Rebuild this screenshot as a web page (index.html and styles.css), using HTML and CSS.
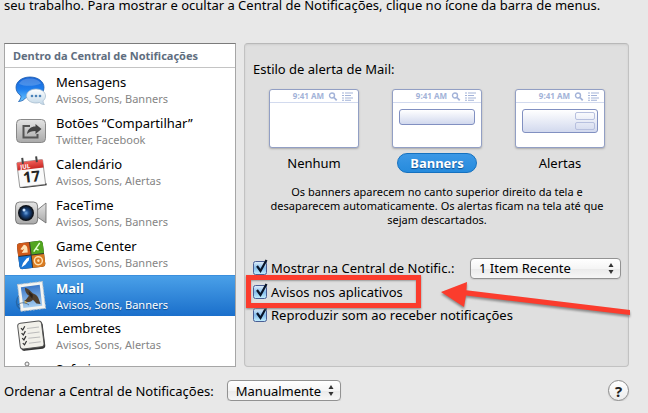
FILE: index.html
```html
<!DOCTYPE html>
<html lang="pt-BR">
<head>
<meta charset="utf-8">
<title>Notificações</title>
<link rel="stylesheet" href="styles.css">
</head>
<body>
<svg class="defs" width="0" height="0" aria-hidden="true">
  <defs>
    <linearGradient id="blue" x2="0" y2="1"><stop stop-color="#1763d6"/><stop offset=".5" stop-color="#1f7fee"/><stop offset="1" stop-color="#6cc8ff"/></linearGradient>
    <linearGradient id="pale" x2="0" y2="1"><stop stop-color="#fff"/><stop offset="1" stop-color="#c3d8e8"/></linearGradient>
    <linearGradient id="grey" x2="0" y2="1"><stop stop-color="#e4e4e4"/><stop offset="1" stop-color="#a9a9a9"/></linearGradient>
    <linearGradient id="red" x2="0" y2="1"><stop stop-color="#f0605a"/><stop offset="1" stop-color="#c92723"/></linearGradient>
    <radialGradient id="lens"><stop stop-color="#6fa6e0"/><stop offset=".4" stop-color="#1d4c8c"/><stop offset="1" stop-color="#0a1526"/></radialGradient>
    <linearGradient id="sky" x2="0" y2="1"><stop stop-color="#3c78c8"/><stop offset="1" stop-color="#a5cdf0"/></linearGradient>
    <symbol id="menubar" viewBox="0 0 26 9">
      <g fill="none" stroke="#a3b3d8"><circle cx="4" cy="3.500" r="2.500" stroke-width="1.400"/><path d="M6 5.500l2.700 2.800" stroke-width="1.800"/><path d="M14 1h2M17 1h8M14 3.500h2M17 3.500h6M14 6h2M17 6h8M14 8.200h2M17 8.200h6" stroke-width="1.100"/></g>
    </symbol>
  </defs>
</svg>
<p class="intro">seu trabalho. Para mostrar e ocultar a Central de Notificações, clique no ícone da barra de menus.</p>
<main class="panes">
  <section class="apps">
    <h2 class="apps-title">Dentro da Central de Notificações</h2>
    <ul class="app-list">
      <li class="app">
        <svg class="app-icon" viewBox="0 0 32 32" aria-hidden="true"><path d="M15 3C7 3 1 7.500 1 13.500c0 3.500 2 6.500 5 8.300 0 2.500-1 4.200-2.500 5.700 3.500-.2 5.800-1.700 7.500-4 9.500 1.500 18-3 18-10C29 7.500 23 3 15 3z" fill="url(#blue)" stroke="#1a5cae" stroke-width=".8"/><path d="M4 10c2-4 6-5.500 11-5.500s9 1.500 11 5c-6 2.500-15 3.500-22 .5z" fill="#fff" opacity=".2"/><path d="M21 15c-5.500 0-9.500 3-9.500 7s4 7 9.500 7c1.200 0 2.300-.1 3.400-.5 1.300 1.300 2.700 2 5 2-.9-1-1.400-2.200-1.300-3.700 1.500-1.200 2.400-2.900 2.400-4.800 0-4-4-7-9.500-7z" fill="url(#pale)" stroke="#9db5c8" stroke-width=".7"/><g fill="#4b83b9"><circle cx="17" cy="22" r="1.300"/><circle cx="21" cy="22" r="1.300"/><circle cx="25" cy="22" r="1.300"/></g></svg>
        <div><h3 class="app-name">Mensagens</h3><p class="app-note">Avisos, Sons, Banners</p></div>
      </li>
      <li class="app">
        <svg class="app-icon" viewBox="0 0 32 32" aria-hidden="true"><rect x="1.500" y="4.500" width="29" height="23" rx="4" fill="url(#grey)" stroke="#888"/><path d="M15 11H8.500v11.500h14V19" fill="none" stroke="#555" stroke-width="2"/><path d="M12 19c.5-5 4-7.500 8.500-7.500V9l6 5-6 5v-3c-4 0-6.500 1-8.500 3z" fill="#444"/></svg>
        <div><h3 class="app-name">Botões “Compartilhar”</h3><p class="app-note">Twitter, Facebook</p></div>
      </li>
      <li class="app">
        <svg class="app-icon" viewBox="0 0 32 32" aria-hidden="true"><g transform="rotate(-7 16 16)"><path d="M3 29h27v2H3z" fill="#333"/><rect x="3" y="5" width="26" height="25" rx="1" fill="#fafafa" stroke="#777" stroke-width=".7"/><path d="M3 5h26v8H3z" fill="url(#red)"/><text x="6" y="12" class="cal-month">JUL</text><path d="M9 1v6M23 1v6" stroke="#444" stroke-width="2"/><text x="16" y="26" class="cal-day">17</text></g></svg>
        <div><h3 class="app-name">Calendário</h3><p class="app-note">Avisos, Sons, Alertas</p></div>
      </li>
      <li class="app">
        <svg class="app-icon" viewBox="0 0 32 32" aria-hidden="true"><path d="M21 14l10-8v20l-10-7z" fill="url(#grey)" stroke="#666" stroke-width=".8"/><rect x=".6" y="5" width="22" height="22" rx="4" fill="url(#grey)" stroke="#666" stroke-width=".8"/><circle cx="11" cy="16" r="8" fill="#101318"/><circle cx="11" cy="16" r="7" fill="url(#lens)"/><circle cx="9" cy="13" r="1.500" fill="#cce4ff"/></svg>
        <div><h3 class="app-name">FaceTime</h3><p class="app-note">Avisos, Sons, Banners</p></div>
      </li>
      <li class="app">
        <svg class="app-icon" viewBox="0 0 32 32" aria-hidden="true"><g transform="rotate(-7 16 16)"><rect x="3" y="4" width="26" height="26" rx="3" fill="#333"/><path d="M3 7q0-3 3-3h9.500v12.500H3z" fill="#d05a1a"/><path d="M16.500 4H26q3 0 3 3v9.500H16.500z" fill="#51a51f"/><path d="M3 17.500h12.500V30H6q-3 0-3-3z" fill="#1975d5"/><path d="M16.500 17.500H29V27q0 3-3 3h-9.500z" fill="#d97b22"/><path d="M7 14h6c0-3 1-7-3-8l-4 4 2 1 2-1z" fill="#ffe3b5"/><path d="M19 14l7-8M21 11l3 2" stroke="#e5ffd0" stroke-width="1.500"/><path d="M5 28l2-4 4-4 3-1-1 3-4 4z" fill="#fff"/><circle cx="22.500" cy="23.500" r="4" fill="none" stroke="#ffe1b0" stroke-width="1.500"/><circle cx="22.500" cy="23.500" r="1.300" fill="#ffe1b0"/></g></svg>
        <div><h3 class="app-name">Game Center</h3><p class="app-note">Avisos, Sons, Banners</p></div>
      </li>
      <li class="app app-selected">
        <svg class="app-icon" viewBox="0 0 32 32" aria-hidden="true"><circle cx="10" cy="22" r="8.500" fill="none" stroke="#275b91" stroke-width="1.500" opacity=".7"/><g transform="rotate(-7 16 16)"><rect x="4" y="3" width="25" height="27" fill="#f5f5f1" stroke="#bcc4cc" stroke-dasharray="2 1"/><rect x="7" y="6" width="19" height="21" fill="url(#sky)"/><path d="M11 7c3 1 5 3.500 7 6.500 2 1 4 2.500 5 5l1.500 6.500-4-1-3-4c-1.500 1.500-3.500 2-6.500 1.500l-2.500-1.500 2-1 3.500-3.500C11.500 13 10.500 10.500 11 7z" fill="#4f3f2e"/><path d="M14 11l4 4-1 4-2-3z" fill="#2c2119"/><path d="M9 20l3 2-3 1z" fill="#d9b75c"/></g><path d="M3 25c3-3 7-3 11 0" fill="none" stroke="#274766" opacity=".6"/></svg>
        <div><h3 class="app-name">Mail</h3><p class="app-note">Avisos, Sons, Banners</p></div>
      </li>
      <li class="app">
        <svg class="app-icon" viewBox="0 0 32 32" aria-hidden="true"><g transform="rotate(-7 16 16)"><rect x="5" y="3" width="24" height="27" rx="3" fill="#333"/><rect x="4" y="2" width="24" height="26" rx="3" fill="#f1f0ea" stroke="#555"/><path d="M13 8h12M13 13h12M13 18h12M13 23h12" stroke="#bbb"/><path d="M7 7l1.500 2L11 5.500M7 12l1.500 2L11 10.500M7 17l1.500 2 2.500-3.500M7 22l1.500 2 2.500-3.500" fill="none" stroke="#333" stroke-width="1.200"/></g></svg>
        <div><h3 class="app-name">Lembretes</h3><p class="app-note">Avisos, Sons, Alertas</p></div>
      </li>
      <li class="app">
        <svg class="app-icon" viewBox="0 0 32 32" aria-hidden="true"><circle cx="12" cy="3" r="2" fill="#eee" stroke="#777"/><path d="M13 5l5 3" stroke="#777"/><circle cx="16" cy="20" r="12" fill="#ddd" stroke="#888"/></svg>
        <div><h3 class="app-name">Safari</h3></div>
      </li>
    </ul>
  </section>
  <section class="settings">
    <h2 class="settings-title">Estilo de alerta de Mail:</h2>
    <div class="styles" role="radiogroup" aria-label="Estilo de alerta de Mail">
      <label class="style"><input class="style-input" type="radio" name="style">
        <span class="thumb"><span class="thumb-bar">9:41 AM<svg class="thumb-icons"><use href="#menubar"/></svg></span></span>
        <span class="style-name">Nenhum</span></label>
      <label class="style"><input class="style-input" type="radio" name="style" checked>
        <span class="thumb"><span class="thumb-bar">9:41 AM<svg class="thumb-icons"><use href="#menubar"/></svg></span><span class="bubble"></span></span>
        <span class="style-name">Banners</span></label>
      <label class="style"><input class="style-input" type="radio" name="style">
        <span class="thumb"><span class="thumb-bar">9:41 AM<svg class="thumb-icons"><use href="#menubar"/></svg></span><span class="bubble bubble-alert"><i class="bubble-button"></i><i class="bubble-button"></i></span></span>
        <span class="style-name">Alertas</span></label>
    </div>
    <p class="hint">Os banners aparecem no canto superior direito da tela e desaparecem automaticamente. Os alertas ficam na tela até que sejam descartados.</p>
    <div class="options">
      <div class="option option-first">
        <label class="check"><input class="box" type="checkbox" checked>Mostrar na Central de Notific.:</label>
        <select class="popup popup-items" aria-label="Itens recentes"><option>1 Item Recente</option></select>
      </div>
      <div class="option option-marked">
        <label class="check"><input class="box" type="checkbox" checked>Avisos nos aplicativos</label>
        <svg class="arrow" viewBox="0 0 192 38" aria-hidden="true"><path d="M1 13L27 3l-.6 8.300L190 31v5L26 16.500 24 28z"/></svg>
      </div>
      <div class="option">
        <label class="check"><input class="box" type="checkbox" checked>Reproduzir som ao receber notificações</label>
      </div>
    </div>
  </section>
</main>
<footer class="footer">
  <label for="order">Ordenar a Central de Notificações:</label>
  <select class="popup" id="order"><option>Manualmente</option></select>
  <button class="help" type="button" aria-label="Ajuda">?</button>
</footer>
</body>
</html>
```
FILE: styles.css
```css
*, *::before { box-sizing: border-box; }
body {
  margin: 0;
  padding: 0 19px 0 4px;
  background: #e8e8e8;
  color: #000;
  font: 13px/18px "Noto Sans", "Open Sans", sans-serif;
  overflow: hidden;
}
h2, h3, p, ul { margin: 0; padding: 0; font-size: inherit; font-weight: inherit; }
.defs { position: absolute; }
.intro { height: 43px; margin-top: -4px; margin-bottom: 4px; white-space: nowrap; }
.panes { display: grid; grid-template-columns: 232px minmax(0, 1fr); gap: 8px; }

.apps {
  contain: size;
  overflow: hidden;
  background: #fff;
  border: 1px solid #a6a6a6;
  border-top-color: #7b7b7b;
}
.apps-title {
  height: 24px;
  padding-left: 8px;
  border-bottom: 1px solid #c4c4c4;
  color: #5f6e80;
  font-size: 11px;
  font-weight: 700;
  line-height: 24px;
}
.app-list { list-style: none; padding-top: 2px; }
.app { display: flex; gap: 9px; height: 41px; padding: 4px 10px; }
.app-icon { width: 32px; height: 32px; }
.app-name { line-height: 16px; }
.app-note { color: #858585; font-size: 11px; line-height: 17px; }
.app-selected { background: linear-gradient(#4aa0e8, #1a6fcb); border-top: 1px solid #3b8fdd; color: #fff; text-shadow: 0 1px 1px #0d4a8c; }
.app-selected .app-name { font-weight: 700; }
.app-selected .app-note { color: #fff; }
.cal-day { font: 700 15px "Open Sans", sans-serif; text-anchor: middle; fill: #222; }
.cal-month { font: 700 6px "Open Sans", sans-serif; fill: #fff; }

.settings {
  padding: 16px 7px 40px 8px;
  background: #dfdfdf;
  border: 1px solid #c2c2c2;
  border-top-color: #b8b8b8;
  border-radius: 4px;
  box-shadow: inset 0 1px 2px #cfcfcf;
}
.styles { display: grid; grid-template-columns: repeat(3, 90px); justify-content: center; gap: 33px; margin-top: 11px; }
.style { display: flex; flex-direction: column; align-items: center; gap: 5px; }
.style-input { position: absolute; opacity: 0; pointer-events: none; }
.thumb {
  width: 100%;
  height: 59px;
  background: #fff;
  border: 1px solid #929fc4;
  border-radius: 3px;
  box-shadow: 0 1px 2px #aaa;
}
.thumb-bar {
  display: flex;
  justify-content: flex-end;
  align-items: center;
  gap: 4px;
  height: 13px;
  padding-right: 4px;
  border-bottom: 1px solid #d2daee;
  color: #a3b3d8;
  font-size: 8px;
  font-weight: 700;
}
.thumb-icons { width: 26px; height: 9px; }
.bubble {
  display: flex;
  flex-direction: column;
  align-items: flex-end;
  gap: 2px;
  height: 16px;
  margin: 6px;
  padding: 2px;
  border: 1px solid #8190c1;
  border-radius: 3px;
  background: linear-gradient(#fff, #d2d9ee);
}
.bubble-alert { height: 24px; }
.bubble-button { width: 20px; height: 8px; border: 1px solid #b7c0df; border-radius: 2px; }
.style-name { height: 20px; padding: 0 12px; border: 1px solid transparent; border-radius: 10px; }
.style-input:checked ~ .style-name {
  background: linear-gradient(#3c98e6, #268bdd);
  border-color: #1571bf;
  color: #fff;
  font-weight: 700;
  text-shadow: 0 1px 1px #0d4a8c;
}
.hint { max-width: 344px; margin: 12px auto 0; font-size: 11px; line-height: 14px; text-align: center; }

.options { margin-top: 29px; }
.option { display: flex; align-items: center; height: 23px; }
.option-first { justify-content: space-between; height: 24px; }
.option-marked { position: relative; }
.option-marked::before {
  content: "";
  position: absolute;
  left: -7px;
  top: -5px;
  width: 175px;
  height: 33px;
  border: 5px solid #fb3c2d;
  box-shadow: 0 1px 2px #888, inset 0 1px 2px #999;
}
.check { display: flex; align-items: center; gap: 1px; white-space: nowrap; }
.box {
  appearance: none;
  width: 17px;
  height: 18px;
  margin: 0;
  background: url("data:image/svg+xml,%3Csvg xmlns='http://www.w3.org/2000/svg' viewBox='0 0 17 18'%3E%3Cdefs%3E%3ClinearGradient id='g' x2='0' y2='1'%3E%3Cstop stop-color='%23e4f1fb'/%3E%3Cstop offset='.5' stop-color='%2386bdec'/%3E%3Cstop offset='1' stop-color='%23c4f0ff'/%3E%3C/linearGradient%3E%3C/defs%3E%3Crect x='.5' y='2.500' width='13' height='13' rx='2' fill='url(%23g)' stroke='%23495d94'/%3E%3Cpath d='M4 7l3.500 5L13.500 1' fill='none' stroke='%23081428' stroke-width='2.200'/%3E%3C/svg%3E");
}
.arrow {
  position: absolute;
  left: 187px;
  top: -1px;
  width: 192px;
  height: 38px;
  overflow: visible;
  fill: #fb3c2d;
  filter: drop-shadow(0 2px 1px #888);
}
.popup {
  appearance: none;
  height: 21px;
  padding: 0 18px 0 8px;
  border: 1px solid #929292;
  border-radius: 4px;
  background:
    url("data:image/svg+xml,%3Csvg xmlns='http://www.w3.org/2000/svg' viewBox='0 0 6 11'%3E%3Cpath d='M.5 4L3 0l2.500 4zM.5 7L3 11l2.500-4z' fill='%23333'/%3E%3C/svg%3E") right 6px center / 6px 11px no-repeat,
    linear-gradient(#fff, #f5f5f5 50%, #eaeaea 51%, #f6f6f6);
  box-shadow: 0 1px 1px #ccc;
  color: #000;
  font: inherit;
  line-height: 18px;
}
.popup-items { width: 151px; }
.footer { display: flex; align-items: center; gap: 13px; margin-top: 13px; }
.help {
  width: 21px;
  height: 21px;
  margin-left: auto;
  padding: 0;
  border: 1px solid #8c8c8c;
  border-radius: 50%;
  background: linear-gradient(#fff, #ececec);
  box-shadow: 0 1px 1px #ccc;
  color: #222;
  font: 700 15px/18px "Noto Sans", sans-serif;
}
```
